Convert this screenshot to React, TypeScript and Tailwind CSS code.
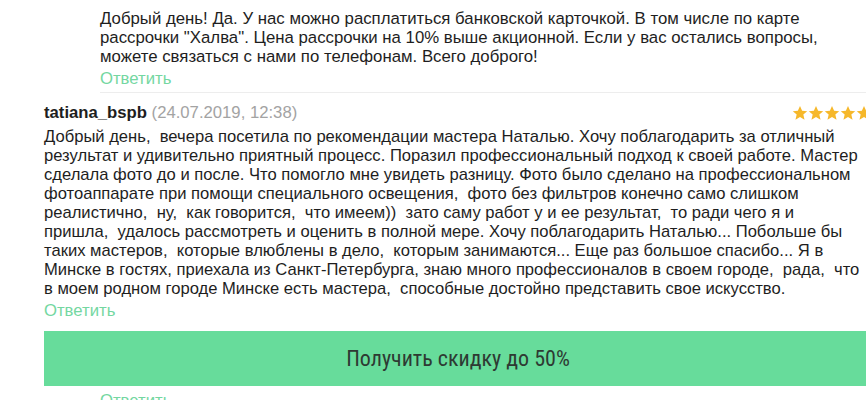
import React from "react";

const replyLines = [
  "Добрый день! Да. У нас можно расплатиться банковской карточкой. В том числе по карте",
  "рассрочки \"Халва\". Цена рассрочки на 10% выше акционной. Если у вас остались вопросы,",
  "можете связаться с нами по телефонам. Всего доброго!",
];

const reviewLines = [
  "Добрый день,  вечера посетила по рекомендации мастера Наталью. Хочу поблагодарить за отличный",
  "результат и удивительно приятный процесс. Поразил профессиональный подход к своей работе. Мастер",
  "сделала фото до и после. Что помогло мне увидеть разницу. Фото было сделано на профессиональном",
  "фотоаппарате при помощи специального освещения,  фото без фильтров конечно само слишком",
  "реалистично,  ну,  как говорится,  что имеем))  зато саму работ у и ее результат,  то ради чего я и",
  "пришла,  удалось рассмотреть и оценить в полной мере. Хочу поблагодарить Наталью... Побольше бы",
  "таких мастеров,  которые влюблены в дело,  которым занимаются... Еще раз большое спасибо... Я в",
  "Минске в гостях, приехала из Санкт-Петербурга, знаю много профессионалов в своем городе,  рада,  что",
  "в моем родном городе Минске есть мастера,  способные достойно представить свое искусство.",
];

function Star() {
  return (
    <svg width="16" height="16" viewBox="0 0 24 24" className="shrink-0">
      <path
        d="M12 1.5l3.2 7.1 7.6.7-5.8 5.1 1.8 7.6L12 18l-6.8 4 1.8-7.6-5.8-5.1 7.6-.7z"
        fill="#f6b82b"
      />
    </svg>
  );
}

function ReplyLink({ className = "" }: { className?: string }) {
  return <div className={`text-[16.7px] leading-[19px] text-[#74d7a1] ${className}`}>Ответить</div>;
}

export default function App() {
  return (
    <div
      className="h-[400px] w-[866px] overflow-hidden bg-white text-[#1e1e1e]"
      style={{ fontFamily: '"Liberation Sans", Arial, sans-serif' }}
    >
      <div className="w-[872px] pl-[44px]">
        {/* answer from the salon */}
        <div className="pl-[56px] pt-[9px]">
          <div className="text-[16.8px] leading-[19px] whitespace-pre">
            {replyLines.map((l, i) => (
              <div key={i}>{l}</div>
            ))}
          </div>
          <ReplyLink className="mt-[3px]" />
          <div className="mt-[4px] border-b border-[#ededed]" />
        </div>

        {/* review */}
        <div className="mt-[10px] flex items-center justify-between">
          <div className="text-[16.7px] leading-[19px]">
            <span className="font-bold">tatiana_bspb</span>{" "}
            <span className="text-[#a3a3a3]">(24.07.2019, 12:38)</span>
          </div>
          <div className="flex">
            <Star />
            <Star />
            <Star />
            <Star />
            <Star />
          </div>
        </div>
        <div className="mt-[5px] text-[16.6px] leading-[19px] whitespace-pre">
          {reviewLines.map((l, i) => (
            <div key={i}>{l}</div>
          ))}
        </div>
        <ReplyLink className="mt-[3px]" />

        <div className="mt-[11px] flex h-[55px] items-center justify-center bg-[#67dc9b]">
          <span
            className="text-[22px] text-[#2e3a33]"
            style={{ fontFamily: '"Liberation Sans Narrow", "Roboto Condensed", Roboto, sans-serif' }}
          >
            Получить скидку до 50%
          </span>
        </div>
        <ReplyLink className="mt-[5px] pl-[56px]" />
      </div>
    </div>
  );
}
